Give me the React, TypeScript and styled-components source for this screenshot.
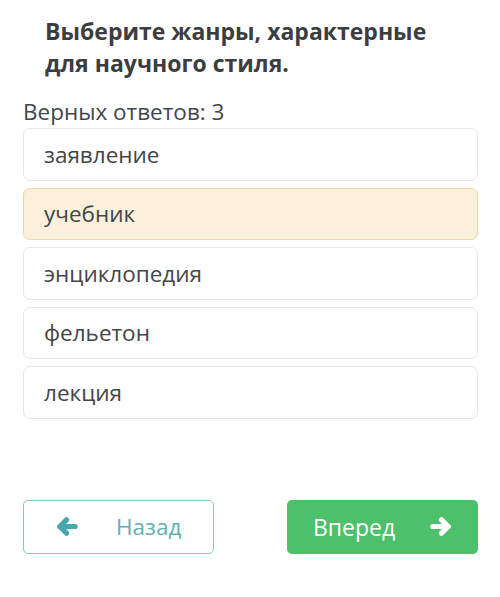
import React from "react";
import styled, { createGlobalStyle } from "styled-components";

const GlobalStyle = createGlobalStyle`
  body {
    margin: 0;
    background: #fff;
    font-family: "Open Sans", "Noto Sans", sans-serif;
  }
`;

const answers = ["заявление", "учебник", "энциклопедия", "фельетон", "лекция"];
const selected = 1;

// chunky arrow, like the old font-awesome one
function Arrow({ dir }: { dir: "left" | "right" }) {
  return (
    <svg viewBox="0 0 24 20" width="23" height="19" fill="none"
      style={{ transform: dir == "right" ? "scaleX(-1)" : undefined }}>
      <path d="M5 10H21" stroke="currentColor" strokeWidth="5.5" strokeLinecap="round" />
      <path d="M12 3L5 10L12 17" stroke="currentColor" strokeWidth="5.5"
        strokeLinecap="round" strokeLinejoin="round" />
    </svg>
  );
}

function App() {
  return (
    <>
      <GlobalStyle />
      <Page>
        <Title>Выберите жанры, характерные для научного стиля.</Title>
        <Hint>Верных ответов: 3</Hint>
        <List>
          {answers.map((a, i) => (
            <Option key={a} $active={i == selected}>
              {a}
            </Option>
          ))}
        </List>
        <Nav>
          <BackButton>
            <Arrow dir="left" />
            <span>Назад</span>
          </BackButton>
          <NextButton>
            <span>Вперед</span>
            <Arrow dir="right" />
          </NextButton>
        </Nav>
      </Page>
    </>
  );
}

const Page = styled.div`
  width: 455px;
  margin-left: 23px;
  padding-top: 15px;
`;

const Title = styled.h2`
  margin: 0 0 0 22px;
  width: 400px;
  font-size: 23px;
  line-height: 32px;
  font-weight: 700;
  color: #3c3d40;
`;

const Hint = styled.div`
  margin-top: 18px;
  font-size: 22.5px;
  line-height: 30px;
  color: #444547;
`;

const List = styled.div`
  display: flex;
  flex-direction: column;
  gap: 7px;
  margin-top: 1px;
`;

const Option = styled.div<{ $active?: boolean }>`
  box-sizing: border-box;
  height: 52.5px;
  display: flex;
  align-items: center;
  padding-left: 20px;
  font-size: 22.5px;
  color: #444547;
  border-radius: 7px;
  border: 1px solid ${(p) => (p.$active ? "#ecd8a4" : "#e6e6e6")};
  background: ${(p) => (p.$active ? "#fbf0db" : "#fff")};
`;

const Nav = styled.div`
  display: flex;
  justify-content: space-between;
  margin-top: 81px;
`;

const BaseButton = styled.button`
  box-sizing: border-box;
  width: 191px;
  height: 54px;
  border-radius: 5px;
  display: flex;
  align-items: center;
  font-family: "Open Sans", sans-serif;
  font-size: 23px;
  cursor: pointer;
`;

const BackButton = styled(BaseButton)`
  background: #fff;
  border: 1px solid #8cc6c9;
  color: #62afb4;
  padding: 0 0 0 31px;
  gap: 38px;
  font-size: 22.5px;
  svg {
    color: #47a7ad;
  }
`;

const NextButton = styled(BaseButton)`
  background: #4cc06a;
  border: none;
  color: #fff;
  padding: 0 25px 0 26px;
  justify-content: space-between;
`;

export default App;
